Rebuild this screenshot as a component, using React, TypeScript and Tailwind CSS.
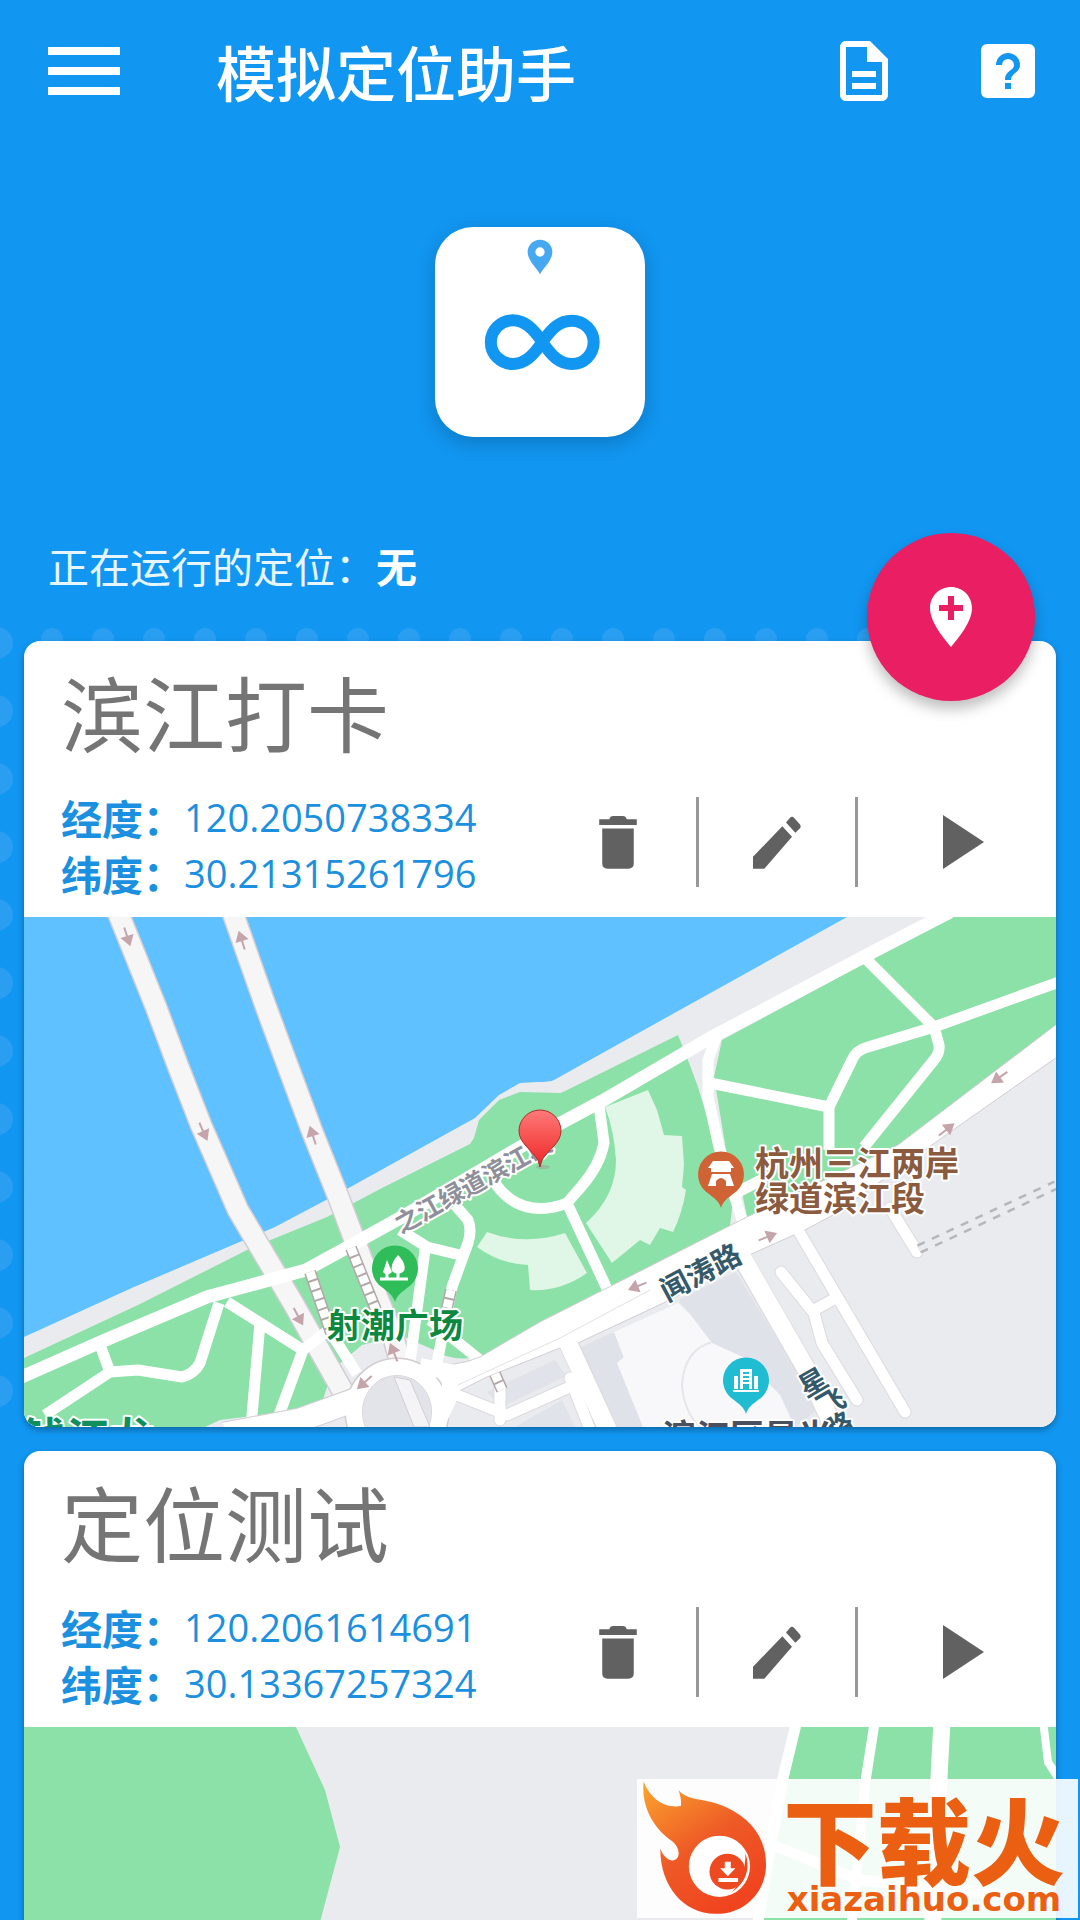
import { useState } from "react";
import type { ReactNode } from "react";
import { MdOutlineDescription } from "react-icons/md";

interface Place {
  id: number;
  name: string;
  lng: string;
  lat: string;
  map: ReactNode;
}

const ROAD_EDGE = "#d3cdd3";

function Pin({ x, y, color, children }: { x: number; y: number; color: string; children: ReactNode }) {
  return (
    <g transform={`translate(${x} ${y})`}>
      <path d="M0 34 C-2 27 -7 24 -12 20 A23 23 0 1 1 12 20 C7 24 2 27 0 34Z" fill={color} />
      {children}
    </g>
  );
}

function Arrow({ x, y, r }: { x: number; y: number; r: number }) {
  return (
    <path
      d="M-9 0H2M1 -5L9 0L1 5Z"
      transform={`translate(${x} ${y}) rotate(${r})`}
      fill="#c5a4ab"
      stroke="#c5a4ab"
      strokeWidth="2"
    />
  );
}

function Ladder({ d }: { d: string }) {
  return (
    <>
      <path d={d} stroke="#b3a8a8" strokeWidth="12" />
      <path d={d} stroke="#fff" strokeWidth="9" strokeDasharray="8 2" />
    </>
  );
}

function RiversideMap() {
  const water =
    "M24 917H847L554 1080Q550 1082 537 1082L520 1083L499 1095L475 1118L345 1190L275 1227L134 1287L24 1337Z";
  const westGreen =
    "M24 1358L138 1305L251 1248L327 1217L384 1187L470 1144L474 1138L479 1120L499 1100L520 1092L561 1093L678 1035L688 1060L698 1087L710 1127L722 1165L733 1200L730 1226L540 1322L480 1357Q450 1362 434 1350L400 1335L362 1345L338 1365Q325 1385 322 1407L220 1420L205 1427H24Z";
  const eastGreen =
    "M1056 917H951L867 962L722 1040L714 1077L726 1150L743 1197L747 1217L898 1145L1056 1025Z";
  const mainRoad =
    "M1070 1014L898 1145L747 1217L540 1322L480 1357Q455 1368 420 1364V1440L447 1397L487 1377L560 1348L578 1343L674 1298L747 1256L805 1230L833 1215L953 1130L1070 1048Z";
  const bridgeWest = "M115 905L156 1007L178 1066L201 1125L238 1210L293 1303L350 1404";
  const bridgeEast = "M230 905L266 1007L283 1053L312 1131L338 1196L362 1260L392 1333L402 1368";
  const trails =
    "M865 958L934 1027L939 1045Q940 1053 934 1060L864 1147 M1070 978L934 1027L868 1047Q856 1050 852 1060L829 1107V1150 M710 1083L829 1107 M717 1035L708 1060V1097L719 1147L743 1223 M738 1192L765 1178 M599 1105L604 1143Q600 1165 581 1187L567 1203Q550 1210 533 1208Q510 1205 495 1183 M567 1203L609 1293 M400 1230L427 1247L460 1255 M455 1205L468 1220Q472 1230 468 1243L452 1287L437 1363 M425 1250L410 1362 M430 1320L480 1360 M100 1345L110 1372L45 1415 M110 1372L138 1370L182 1377Q194 1374 200 1363L219 1303 M227 1302L303 1350L279 1415 M260 1323L251 1427 M303 1350L331 1328 M331 1333L357 1374";
  const streets =
    "M798 1230L905 1412 M781 1272L814 1313L822 1343L857 1400 M814 1310L836 1298 M890 1208L917 1252 M570 1378L594 1440 M572 1386L507 1415L452 1393 M500 1385V1420";

  return (
    <svg viewBox="24 917 1032 510" className="block w-full" fill="none" role="img" aria-label="滨江打卡地图">
      <rect x="24" y="917" width="1032" height="510" fill="#e9ebee" />
      <path d={water} fill="#5fc1ff" />
      <path d={westGreen} fill="#8be1a7" />
      <path d={eastGreen} fill="#8be1a7" />

      {/* amphitheatre lawns */}
      <path
        d="M605 1107L648 1090L657 1110L664 1135L682 1136L684 1165L682 1187L686 1190Q682 1214 673 1232L660 1228L650 1245L640 1240L612 1263L586 1223Q616 1196 616 1160Q614 1130 605 1107Z M487 1232Q525 1246 565 1233L587 1273Q560 1292 530 1290L528 1265Q500 1264 477 1247Z"
        fill="#e0f6e6"
      />

      {/* blocks south of the main road */}
      <path d="M578 1348L614 1332L623 1357L619 1367L643 1427H612Z" fill="#dfe2e8" />
      <path d="M678 1300L736 1272L802 1380L815 1412L795 1427L770 1385L712 1343Z" fill="#dfe2e8" />
      <path d="M614 1332L678 1303L690 1314L712 1343L743 1357L780 1395L795 1427H643L617 1363L624 1357Z" fill="#f8f8fa" />
      <path d="M712 1342Q684 1350 682 1385Q684 1412 700 1427" stroke="#e6e6ea" strokeWidth="2" />
      <path d="M487 1392L555 1360L566 1376L500 1408Z M515 1427L562 1400L575 1427Z" fill="#e0e3e9" />

      <path d={bridgeWest} stroke={ROAD_EDGE} strokeWidth="23" strokeLinejoin="round" />
      <path d={bridgeWest} stroke="#f6f6f7" strokeWidth="20" strokeLinejoin="round" />
      <path d={bridgeEast} stroke={ROAD_EDGE} strokeWidth="23" strokeLinejoin="round" />
      <path d={bridgeEast} stroke="#f6f6f7" strokeWidth="20" strokeLinejoin="round" />

      <path d={trails} stroke="#fff" strokeWidth="11" strokeLinejoin="round" />
      <path
        d="M10 1382L103 1341L207 1297L306 1270L348 1247L400 1218L561 1123L602 1101L712 1037L867 955L950 912"
        stroke="#fff"
        strokeWidth="13"
      />

      <path d={streets} stroke="#dcdade" strokeWidth="13" strokeLinecap="round" strokeLinejoin="round" />
      <path d="M742 1258L808 1372L835 1430 M567 1340L608 1430" stroke="#dcdade" strokeWidth="20" />
      <path d={mainRoad} fill="#fff" stroke={ROAD_EDGE} />
      <path d={streets} stroke="#fff" strokeWidth="11" strokeLinecap="round" strokeLinejoin="round" />
      <path d="M738 1250L808 1372L835 1430 M563 1332L608 1430" stroke="#fff" strokeWidth="18" />
      <path d="M447 1390L560 1338L650 1290" stroke="#e4e0e4" />

      {/* roundabout */}
      <path d="M225 1434L300 1420L360 1398" stroke={ROAD_EDGE} strokeWidth="25" />
      <ellipse cx="397" cy="1412" rx="43" ry="45" stroke={ROAD_EDGE} strokeWidth="19" />
      <path d="M225 1434L300 1420L366 1396" stroke="#fff" strokeWidth="23" />
      <path d="M420 1366L450 1372V1396L434 1430" stroke="#fff" strokeWidth="16" />
      <ellipse cx="397" cy="1412" rx="35" ry="37" fill="#e3e4e9" stroke={ROAD_EDGE} />
      <ellipse cx="397" cy="1412" rx="43" ry="45" stroke="#fff" strokeWidth="16" />
      <path d="M394 1377L414 1427H430L410 1380Z" fill="#f4f4f6" stroke={ROAD_EDGE} />

      <Ladder d="M310 1272L331 1333" />
      <Ladder d="M351 1248L376 1310" />
      <Ladder d="M451 1290L447 1308" />
      <Ladder d="M495 1374L502 1390" />
      <path d="M919 1249L1056 1185" stroke="#b7b7bb" strokeWidth="10" strokeDasharray="8 8" />
      <path d="M919 1249L1056 1185" stroke="#e9ebee" strokeWidth="5" />

      <Arrow x={127} y={936} r={72} />
      <Arrow x={203} y={1131} r={66} />
      <Arrow x={298} y={1316} r={62} />
      <Arrow x={242} y={941} r={-108} />
      <Arrow x={313} y={1136} r={-108} />
      <Arrow x={394} y={1353} r={-112} />
      <Arrow x={365} y={1382} r={138} />
      <Arrow x={638} y={1286} r={158} />
      <Arrow x={767} y={1237} r={-22} />
      <Arrow x={1000} y={1077} r={145} />
      <Arrow x={946} y={1130} r={-38} />

      <g className="font-['Noto_Sans_CJK_SC',sans-serif] font-bold" stroke="#fff" strokeWidth="4" paintOrder="stroke" strokeLinejoin="round">
        <text transform="translate(401 1234) rotate(-29)" fontSize="25" fill="#8f8f99">之江绿道滨江段</text>
        <text x="755" y="1176" fontSize="34" fill="#8a5b3f">杭州三江两岸</text>
        <text x="755" y="1211" fontSize="34" fill="#8a5b3f">绿道滨江段</text>
        <text x="327" y="1338" fontSize="34" fill="#0c8840">射潮广场</text>
        <text transform="translate(667 1302) rotate(-28)" fontSize="29" fill="#36596a">闻涛路</text>
        <text transform="translate(806 1398) rotate(-30)" fontSize="28" fill="#36596a">星</text>
        <text transform="translate(824 1418) rotate(-30)" fontSize="28" fill="#36596a">飞</text>
        <text transform="translate(832 1442) rotate(-30)" fontSize="28" fill="#36596a">路</text>
        <text x="662" y="1449" fontSize="34" fill="#4a5060">滨江区星光</text>
        <text x="22" y="1455" fontSize="44" fill="#0e8f5c">钱江龙</text>
      </g>

      <Pin x={395} y={1268} color="#2ebd59">
        <path d="M-15 11H13 M-8 11V2 M3 11V0" stroke="#fff" strokeWidth="3" />
        <path d="M-8 -8L-3 4Q-8 9 -12 4Z M3 -13Q12 -4 9 3Q3 9 -3 3Q-5 -4 3 -13Z" fill="#fff" />
      </Pin>
      <Pin x={721} y={1174} color="#cf6335">
        <path d="M-8 -13H8L13 -6H10V-2H-10V-6H-13Z M-9 0H9L13 12H5V7Q0 1 -5 7V12H-13Z" fill="#fff" />
      </Pin>
      <Pin x={746} y={1380} color="#1fbcd2">
        <path d="M-6 -11H6V9H3V4H-3V9H-6Z M-12 -4H-8V9H-12Z M8 -4H12V9H8Z M-13 10H13V12H-13Z" fill="#fff" />
        <path d="M-3 -7H3M-3 -3H3M-3 1H3" stroke="#1fbcd2" strokeWidth="2" />
      </Pin>

      <defs>
        <linearGradient id="marker" x1="0" y1="0" x2="0" y2="1">
          <stop offset="0" stopColor="#ff7a78" />
          <stop offset="1" stopColor="#ee2626" />
        </linearGradient>
      </defs>
      <ellipse cx="543" cy="1167" rx="7" ry="2" fill="#9b9b9b" opacity="0.5" />
      <path
        d="M540 1167L538 1160C532 1150 519 1143 519 1131A21 21 0 0 1 561 1131C561 1143 548 1150 542 1160Z"
        fill="url(#marker)"
        stroke="#a92f2f"
      />
    </svg>
  );
}

function FieldMap() {
  return (
    <svg viewBox="24 1727 1032 510" className="block w-full" fill="none" role="img" aria-label="定位测试地图">
      <rect x="24" y="1727" width="1032" height="510" fill="#e9ebee" />
      <path d="M24 1727H296L325 1790L340 1847L320 1922L290 2237H24Z" fill="#8be1a7" />
      <path d="M800 1727H1056V2237H730L766 1900L788 1780Z" fill="#8be1a7" />
      <path d="M797 1720L783 1778L768 1860L755 1940" stroke="#fff" strokeWidth="11" />
      <path d="M775 1846L860 1880L1056 1900" stroke="#fff" strokeWidth="11" />
      <path d="M875 1720L866 1778L850 1940" stroke="#fff" strokeWidth="10" />
      <path d="M942 1720L939 1778L932 1940" stroke="#fff" strokeWidth="17" />
      <path d="M1043 1720L1048 1762L1062 1784" stroke="#fff" strokeWidth="8" />
    </svg>
  );
}

const places: Place[] = [
  { id: 1, name: "滨江打卡", lng: "120.2050738334", lat: "30.21315261796", map: <RiversideMap /> },
  { id: 2, name: "定位测试", lng: "120.2061614691", lat: "30.13367257324", map: <FieldMap /> },
];

function Coordinate({ label, value }: { label: string; value: string }) {
  return (
    <div className="flex items-center">
      <dt className="text-[41px] leading-[56px] font-bold">{label}：</dt>
      <dd className="font-['Open_Sans',sans-serif] text-[38px] leading-[56px]">{value}</dd>
    </div>
  );
}

function PlaceCard({ place, onStart }: { place: Place; onStart: () => void }) {
  return (
    <article className="shrink-0 overflow-hidden rounded-2xl bg-white shadow-[0_3px_6px_rgba(0,0,0,0.3)]">
      <div className="pt-7 pb-4 pl-[37px]">
        <h2 className="text-[82px] leading-[84px] text-[#757575]">{place.name}</h2>
        <div className="mt-9 flex items-start justify-between">
          <dl className="text-[#1c90e0]">
            <Coordinate label="经度" value={place.lng} />
            <Coordinate label="纬度" value={place.lat} />
          </dl>
          <div className="mt-2 flex h-[90px] text-[#616161]">
            <button aria-label="删除" className="flex w-[157px] items-center justify-center">
              <svg viewBox="0 0 112 158" className="h-[53px] w-[38px]" fill="currentColor">
                <path d="M0 10H30Q32 0 42 0H70Q80 0 82 10H112V27H0Z M9 37H103V141Q103 157 87 157H25Q9 157 9 141Z" />
              </svg>
            </button>
            <div className="w-[3px] bg-[#989898]" />
            <button aria-label="编辑" className="flex w-[156px] items-center justify-center">
              <svg viewBox="0 0 144 158" className="h-[53px] w-[48px]" fill="currentColor">
                <path d="M0 122L88 30L117 62L34 158H0Z M99 19L111 5Q117 -1 123 5L141 25Q145 31 141 36L127 50Z" />
              </svg>
            </button>
            <div className="w-[3px] bg-[#989898]" />
            <button aria-label="启动" onClick={onStart} className="flex w-[198px] items-center justify-center pl-3">
              <svg viewBox="0 0 41 54" className="h-[54px] w-[41px]" fill="currentColor">
                <path d="M0 0L41 27L0 54Z" />
              </svg>
            </button>
          </div>
        </div>
      </div>
      {place.map}
    </article>
  );
}

function Dots() {
  const top = Array.from({ length: 20 }, (_, i) => 52 + i * 51);
  const side = Array.from({ length: 12 }, (_, i) => 643 + i * 68);
  return (
    <svg className="absolute inset-0 h-full w-full" fill="#2a9ff2">
      {top.map((x) => <circle key={x} cx={x} cy="639" r="11" />)}
      {side.map((y) => <circle key={y} cx="-3" cy={y} r="16" />)}
    </svg>
  );
}

function Watermark() {
  return (
    <a
      href="#xiazaihuo"
      className="absolute right-0.5 bottom-0.5 flex h-[139px] w-[441px] bg-white/90 text-[#ea5f12]"
    >
      <svg viewBox="50 57 400 417" className="h-[139px] w-[133px] shrink-0">
        <defs>
          <linearGradient id="flame" x1="0" y1="0" x2="0.6" y2="1">
            <stop offset="0" stopColor="#fba62e" />
            <stop offset="0.55" stopColor="#ee5a26" />
            <stop offset="1" stopColor="#f0441f" />
          </linearGradient>
        </defs>
        <path
          d="M70 64C90 115 130 145 182 138C184 118 180 105 175 90C205 125 260 112 320 142C400 180 440 240 438 320C435 400 370 465 285 462C190 460 120 380 120 266C130 292 150 306 164 300C182 290 178 262 156 244C100 204 62 140 70 64Z"
          fill="url(#flame)"
        />
        <circle cx="298" cy="319" r="92" fill="#fff" />
        <path d="M376 280Q400 350 335 398Q378 350 376 280Z" fill="#f0441f" />
        <circle cx="322" cy="335" r="54" fill="#ee4a22" />
        <path d="M314 305H332V325H346L323 349L300 325H314Z M295 354H354V366H295Z" fill="#fff" />
      </svg>
      <span className="flex flex-1 flex-col items-center">
        <span className="mt-4 text-[94px] leading-[84px] font-black whitespace-nowrap">下载火</span>
        <span className="mt-1 font-['DejaVu_Sans',sans-serif] text-[34px] leading-8 font-bold">xiazaihuo.com</span>
      </span>
    </a>
  );
}

export default function App() {
  const [running, setRunning] = useState<string | null>(null);

  return (
    <div
      lang="zh-CN"
      className="relative flex h-screen flex-col overflow-hidden bg-[#1196f1] font-['Noto_Sans_CJK_SC',sans-serif]"
    >
      <Dots />

      <header className="relative flex h-[142px] shrink-0 items-center pr-9 pl-12 text-white">
        <button aria-label="菜单" className="flex w-[72px] flex-col gap-3">
          <span className="h-2 bg-white" />
          <span className="h-2 bg-white" />
          <span className="h-2 bg-white" />
        </button>
        <h1 className="ml-24 flex-1 text-[60px] leading-[72px] font-medium">模拟定位助手</h1>
        <button aria-label="文档">
          <MdOutlineDescription className="size-[72px]" />
        </button>
        <button aria-label="帮助" className="ml-[72px]">
          <svg viewBox="0 0 24 24" className="size-[72px]" fill="currentColor">
            <path
              fillRule="evenodd"
              d="M11 18H13V16H11V18M12 6A4 4 0 0 0 8 10H10A2 2 0 0 1 12 8A2 2 0 0 1 14 10C14 12 11 11.75 11 15H13C13 12.75 16 12.5 16 10A4 4 0 0 0 12 6M5 3H19A2 2 0 0 1 21 5V19A2 2 0 0 1 19 21H5A2 2 0 0 1 3 19V5A2 2 0 0 1 5 3Z"
            />
          </svg>
        </button>
      </header>

      {/* App logo */}
      <div className="relative mx-auto mt-[85px] shrink-0 rounded-[38px] bg-white shadow-[0_6px_20px_rgba(0,0,0,0.2)]">
        <svg viewBox="105 80 630 630" className="size-[210px]" fill="none">
          <path
            fillRule="evenodd"
            d="M420 222C408 200 383 180 383 155A37 37 0 0 1 457 155C457 180 432 200 420 222ZM420 141A14 14 0 0 0 420 169A14 14 0 0 0 420 141Z"
            fill="#45a8f0"
          />
          <path
            d="M427 425C398 382 372 360 338 360A65 65 0 0 0 338 491C372 491 398 469 427 425C456 382 480 361 516 361A65 65 0 0 1 516 491C480 491 456 469 427 425Z"
            stroke="#1196f1"
            strokeWidth="36"
          />
        </svg>
      </div>

      <p className="relative mt-[98px] ml-12 shrink-0 text-[41px] leading-[60px] text-white/90">
        正在运行的定位：<strong className="font-bold text-white">{running ?? "无"}</strong>
      </p>

      {/* Saved places */}
      <main className="relative mx-6 mt-[46px] flex min-h-0 flex-1 flex-col gap-6">
        {places.map((place) => (
          <PlaceCard key={place.id} place={place} onStart={() => setRunning(place.name)} />
        ))}
        <button
          aria-label="添加定位"
          className="absolute -top-[108px] right-[21px] flex size-[168px] items-center justify-center rounded-full bg-[#e91e63] shadow-[0_8px_14px_rgba(0,0,0,0.25)]"
        >
          <svg viewBox="0 0 24 24" className="size-[72px]" fill="#fff">
            <path
              fillRule="evenodd"
              d="M12 2C8.1 2 5 5.1 5 9C5 13.4 9 18.4 12 22C15 18.4 19 13.4 19 9C19 5.1 15.9 2 12 2ZM11 5H13V8H16V10H13V13H11V10H8V8H11Z"
            />
          </svg>
        </button>
      </main>

      <Watermark />
    </div>
  );
}
